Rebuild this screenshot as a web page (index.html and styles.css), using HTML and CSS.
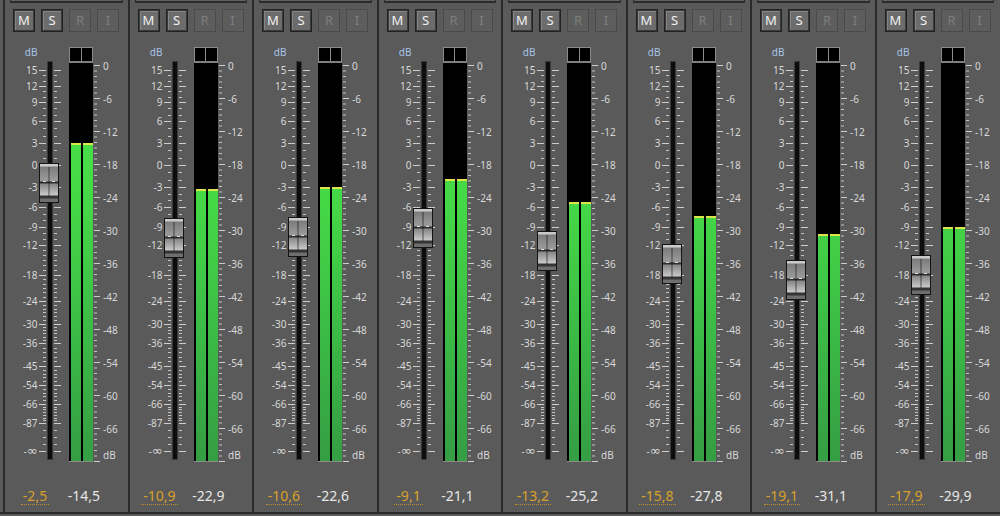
FILE: index.html
```html
<!DOCTYPE html>
<html>
<head>
<meta charset="utf-8">
<link rel="stylesheet" href="styles.css">
</head>
<body>
<svg class="defs" width="0" height="0">
  <symbol id="fs" viewBox="0 0 60 430">
    <rect x="42.5" y="21.5" width="5" height="398" fill="#0d0d0d" stroke="#3b3b3b"/>
    <path fill="none" stroke="#cdcdcd" d="M34 30.5h7m8 0h7M34 46.5h7m8 0h7M34 62.5h7m8 0h7M34 81.5h7m8 0h7M34 103.5h7m8 0h7M34 125.5h7m8 0h7M34 147.5h7m8 0h7M34 167.5h7m8 0h7M34 187.5h7m8 0h7M34 205.5h7m8 0h7M34 235.5h7m8 0h7M34 261.5h7m8 0h7M34 284.5h7m8 0h7M34 303.5h7m8 0h7M34 326.5h7m8 0h7M34 345.5h7m8 0h7M34 364.5h7m8 0h7M34 383.5h7m8 0h7M34 411.5h7m8 0h7"/>
    <path fill="none" stroke="#c4c4c4" d="M38 35.5h3m8 0h3M38 41.5h3m8 0h3M38 51.5h3m8 0h3M38 57.5h3m8 0h3M38 68.5h3m8 0h3M38 75.5h3m8 0h3M38 88.5h3m8 0h3M38 96.5h3m8 0h3M38 110.5h3m8 0h3M38 118.5h3m8 0h3M38 132.5h3m8 0h3M38 140.5h3m8 0h3M38 154.5h3m8 0h3M38 160.5h3m8 0h3M38 174.5h3m8 0h3M38 180.5h3m8 0h3M38 193.5h3m8 0h3M38 199.5h3m8 0h3M38 210.5h3m8 0h3M38 215.5h3m8 0h3M38 220.5h3m8 0h3M38 225.5h3m8 0h3M38 230.5h3m8 0h3M38 239.5h3m8 0h3M38 244.5h3m8 0h3M38 248.5h3m8 0h3M38 252.5h3m8 0h3M38 257.5h3m8 0h3M38 265.5h3m8 0h3M38 269.5h3m8 0h3M38 272.5h3m8 0h3M38 276.5h3m8 0h3M38 280.5h3m8 0h3M38 287.5h3m8 0h3M38 290.5h3m8 0h3M38 293.5h3m8 0h3M38 297.5h3m8 0h3M38 300.5h3m8 0h3M38 308.5h3m8 0h3M38 312.5h3m8 0h3M38 317.5h3m8 0h3M38 321.5h3m8 0h3M38 330.5h3m8 0h3M38 334.5h3m8 0h3M38 337.5h3m8 0h3M38 341.5h3m8 0h3M38 349.5h3m8 0h3M38 353.5h3m8 0h3M38 356.5h3m8 0h3M38 360.5h3m8 0h3M38 367.5h3m8 0h3M38 369.5h3m8 0h3M38 372.5h3m8 0h3M38 375.5h3m8 0h3M38 378.5h3m8 0h3M38 380.5h3m8 0h3M38 390.5h3m8 0h3M38 397.5h3m8 0h3M38 404.5h3m8 0h3"/>
  </symbol>
  <symbol id="ms" viewBox="0 0 31 430">
    <line x1="2.5" y1="25" x2="2.5" y2="423" stroke="#c4c4c4" stroke-width="3" stroke-dasharray="1 4.5"/>
    <line x1="4" y1="25" x2="4" y2="423" stroke="#cdcdcd" stroke-width="6" stroke-dasharray="1 32"/>
  </symbol>
</svg>

<div class="mixer">

  <div class="strip">
    <div class="lid"></div>
    <div class="btns"><span class="btn on">M</span><span class="btn on">S</span><span class="btn off">R</span><span class="btn off">I</span></div>
    <div class="body">
      <div class="fader">
        <svg class="scale" width="60" height="430" viewBox="0 0 60 430"><use href="#fs"/><g class="fl"><text class="db" x="32.5" y="16">dB</text><text x="32.5" y="33.5">15</text><text x="32.5" y="49.5">12</text><text x="32.5" y="65.5">9</text><text x="32.5" y="84.5">6</text><text x="32.5" y="106.5">3</text><text x="32.5" y="128.5">0</text><text x="32.5" y="150.5">-3</text><text x="32.5" y="170.5">-6</text><text x="32.5" y="190.5">-9</text><text x="32.5" y="208.5">-12</text><text x="32.5" y="238.5">-18</text><text x="32.5" y="264.5">-24</text><text x="32.5" y="287.5">-30</text><text x="32.5" y="306.5">-36</text><text x="32.5" y="329.5">-45</text><text x="32.5" y="348.5">-54</text><text x="32.5" y="367.5">-66</text><text x="32.5" y="386.5">-87</text><text x="32.5" y="415">-<tspan class="inf">∞</tspan></text></g></svg>
        <div class="thumb" style="top:123px"></div>
      </div>
      <div class="meter">
        <div class="peaks"><span></span><span></span></div>
        <div class="bars"><span class="bar" style="height:318px"></span><span class="bar" style="height:318px"></span></div>
      </div>
      <svg class="scale" width="31" height="430" viewBox="0 0 31 430"><use href="#ms"/><g class="ml"><text x="10" y="29.5">0</text><text x="10" y="62.5">-6</text><text x="10" y="95.5">-12</text><text x="10" y="128.5">-18</text><text x="10" y="161.5">-24</text><text x="10" y="194.5">-30</text><text x="10" y="227.5">-36</text><text x="10" y="260.5">-42</text><text x="10" y="293.5">-48</text><text x="10" y="326.5">-54</text><text x="10" y="359.5">-60</text><text x="10" y="392.5">-66</text><text x="10" y="418.5">dB</text></g></svg>
    </div>
    <div class="readouts"><span class="vol"><span class="u">-2,5</span></span><span class="lvl">-14,5</span></div>
  </div>

  <div class="strip">
    <div class="lid"></div>
    <div class="btns"><span class="btn on">M</span><span class="btn on">S</span><span class="btn off">R</span><span class="btn off">I</span></div>
    <div class="body">
      <div class="fader">
        <svg class="scale" width="60" height="430" viewBox="0 0 60 430"><use href="#fs"/><g class="fl"><text class="db" x="32.5" y="16">dB</text><text x="32.5" y="33.5">15</text><text x="32.5" y="49.5">12</text><text x="32.5" y="65.5">9</text><text x="32.5" y="84.5">6</text><text x="32.5" y="106.5">3</text><text x="32.5" y="128.5">0</text><text x="32.5" y="150.5">-3</text><text x="32.5" y="170.5">-6</text><text x="32.5" y="190.5">-9</text><text x="32.5" y="208.5">-12</text><text x="32.5" y="238.5">-18</text><text x="32.5" y="264.5">-24</text><text x="32.5" y="287.5">-30</text><text x="32.5" y="306.5">-36</text><text x="32.5" y="329.5">-45</text><text x="32.5" y="348.5">-54</text><text x="32.5" y="367.5">-66</text><text x="32.5" y="386.5">-87</text><text x="32.5" y="415">-<tspan class="inf">∞</tspan></text></g></svg>
        <div class="thumb" style="top:178px"></div>
      </div>
      <div class="meter">
        <div class="peaks"><span></span><span></span></div>
        <div class="bars"><span class="bar" style="height:272px"></span><span class="bar" style="height:272px"></span></div>
      </div>
      <svg class="scale" width="31" height="430" viewBox="0 0 31 430"><use href="#ms"/><g class="ml"><text x="10" y="29.5">0</text><text x="10" y="62.5">-6</text><text x="10" y="95.5">-12</text><text x="10" y="128.5">-18</text><text x="10" y="161.5">-24</text><text x="10" y="194.5">-30</text><text x="10" y="227.5">-36</text><text x="10" y="260.5">-42</text><text x="10" y="293.5">-48</text><text x="10" y="326.5">-54</text><text x="10" y="359.5">-60</text><text x="10" y="392.5">-66</text><text x="10" y="418.5">dB</text></g></svg>
    </div>
    <div class="readouts"><span class="vol"><span class="u">-10,9</span></span><span class="lvl">-22,9</span></div>
  </div>

  <div class="strip">
    <div class="lid"></div>
    <div class="btns"><span class="btn on">M</span><span class="btn on">S</span><span class="btn off">R</span><span class="btn off">I</span></div>
    <div class="body">
      <div class="fader">
        <svg class="scale" width="60" height="430" viewBox="0 0 60 430"><use href="#fs"/><g class="fl"><text class="db" x="32.5" y="16">dB</text><text x="32.5" y="33.5">15</text><text x="32.5" y="49.5">12</text><text x="32.5" y="65.5">9</text><text x="32.5" y="84.5">6</text><text x="32.5" y="106.5">3</text><text x="32.5" y="128.5">0</text><text x="32.5" y="150.5">-3</text><text x="32.5" y="170.5">-6</text><text x="32.5" y="190.5">-9</text><text x="32.5" y="208.5">-12</text><text x="32.5" y="238.5">-18</text><text x="32.5" y="264.5">-24</text><text x="32.5" y="287.5">-30</text><text x="32.5" y="306.5">-36</text><text x="32.5" y="329.5">-45</text><text x="32.5" y="348.5">-54</text><text x="32.5" y="367.5">-66</text><text x="32.5" y="386.5">-87</text><text x="32.5" y="415">-<tspan class="inf">∞</tspan></text></g></svg>
        <div class="thumb" style="top:177px"></div>
      </div>
      <div class="meter">
        <div class="peaks"><span></span><span></span></div>
        <div class="bars"><span class="bar" style="height:274px"></span><span class="bar" style="height:274px"></span></div>
      </div>
      <svg class="scale" width="31" height="430" viewBox="0 0 31 430"><use href="#ms"/><g class="ml"><text x="10" y="29.5">0</text><text x="10" y="62.5">-6</text><text x="10" y="95.5">-12</text><text x="10" y="128.5">-18</text><text x="10" y="161.5">-24</text><text x="10" y="194.5">-30</text><text x="10" y="227.5">-36</text><text x="10" y="260.5">-42</text><text x="10" y="293.5">-48</text><text x="10" y="326.5">-54</text><text x="10" y="359.5">-60</text><text x="10" y="392.5">-66</text><text x="10" y="418.5">dB</text></g></svg>
    </div>
    <div class="readouts"><span class="vol"><span class="u">-10,6</span></span><span class="lvl">-22,6</span></div>
  </div>

  <div class="strip">
    <div class="lid"></div>
    <div class="btns"><span class="btn on">M</span><span class="btn on">S</span><span class="btn off">R</span><span class="btn off">I</span></div>
    <div class="body">
      <div class="fader">
        <svg class="scale" width="60" height="430" viewBox="0 0 60 430"><use href="#fs"/><g class="fl"><text class="db" x="32.5" y="16">dB</text><text x="32.5" y="33.5">15</text><text x="32.5" y="49.5">12</text><text x="32.5" y="65.5">9</text><text x="32.5" y="84.5">6</text><text x="32.5" y="106.5">3</text><text x="32.5" y="128.5">0</text><text x="32.5" y="150.5">-3</text><text x="32.5" y="170.5">-6</text><text x="32.5" y="190.5">-9</text><text x="32.5" y="208.5">-12</text><text x="32.5" y="238.5">-18</text><text x="32.5" y="264.5">-24</text><text x="32.5" y="287.5">-30</text><text x="32.5" y="306.5">-36</text><text x="32.5" y="329.5">-45</text><text x="32.5" y="348.5">-54</text><text x="32.5" y="367.5">-66</text><text x="32.5" y="386.5">-87</text><text x="32.5" y="415">-<tspan class="inf">∞</tspan></text></g></svg>
        <div class="thumb" style="top:168px"></div>
      </div>
      <div class="meter">
        <div class="peaks"><span></span><span></span></div>
        <div class="bars"><span class="bar" style="height:282px"></span><span class="bar" style="height:282px"></span></div>
      </div>
      <svg class="scale" width="31" height="430" viewBox="0 0 31 430"><use href="#ms"/><g class="ml"><text x="10" y="29.5">0</text><text x="10" y="62.5">-6</text><text x="10" y="95.5">-12</text><text x="10" y="128.5">-18</text><text x="10" y="161.5">-24</text><text x="10" y="194.5">-30</text><text x="10" y="227.5">-36</text><text x="10" y="260.5">-42</text><text x="10" y="293.5">-48</text><text x="10" y="326.5">-54</text><text x="10" y="359.5">-60</text><text x="10" y="392.5">-66</text><text x="10" y="418.5">dB</text></g></svg>
    </div>
    <div class="readouts"><span class="vol"><span class="u">-9,1</span></span><span class="lvl">-21,1</span></div>
  </div>

  <div class="strip">
    <div class="lid"></div>
    <div class="btns"><span class="btn on">M</span><span class="btn on">S</span><span class="btn off">R</span><span class="btn off">I</span></div>
    <div class="body">
      <div class="fader">
        <svg class="scale" width="60" height="430" viewBox="0 0 60 430"><use href="#fs"/><g class="fl"><text class="db" x="32.5" y="16">dB</text><text x="32.5" y="33.5">15</text><text x="32.5" y="49.5">12</text><text x="32.5" y="65.5">9</text><text x="32.5" y="84.5">6</text><text x="32.5" y="106.5">3</text><text x="32.5" y="128.5">0</text><text x="32.5" y="150.5">-3</text><text x="32.5" y="170.5">-6</text><text x="32.5" y="190.5">-9</text><text x="32.5" y="208.5">-12</text><text x="32.5" y="238.5">-18</text><text x="32.5" y="264.5">-24</text><text x="32.5" y="287.5">-30</text><text x="32.5" y="306.5">-36</text><text x="32.5" y="329.5">-45</text><text x="32.5" y="348.5">-54</text><text x="32.5" y="367.5">-66</text><text x="32.5" y="386.5">-87</text><text x="32.5" y="415">-<tspan class="inf">∞</tspan></text></g></svg>
        <div class="thumb" style="top:191px"></div>
      </div>
      <div class="meter">
        <div class="peaks"><span></span><span></span></div>
        <div class="bars"><span class="bar" style="height:259px"></span><span class="bar" style="height:259px"></span></div>
      </div>
      <svg class="scale" width="31" height="430" viewBox="0 0 31 430"><use href="#ms"/><g class="ml"><text x="10" y="29.5">0</text><text x="10" y="62.5">-6</text><text x="10" y="95.5">-12</text><text x="10" y="128.5">-18</text><text x="10" y="161.5">-24</text><text x="10" y="194.5">-30</text><text x="10" y="227.5">-36</text><text x="10" y="260.5">-42</text><text x="10" y="293.5">-48</text><text x="10" y="326.5">-54</text><text x="10" y="359.5">-60</text><text x="10" y="392.5">-66</text><text x="10" y="418.5">dB</text></g></svg>
    </div>
    <div class="readouts"><span class="vol"><span class="u">-13,2</span></span><span class="lvl">-25,2</span></div>
  </div>

  <div class="strip">
    <div class="lid"></div>
    <div class="btns"><span class="btn on">M</span><span class="btn on">S</span><span class="btn off">R</span><span class="btn off">I</span></div>
    <div class="body">
      <div class="fader">
        <svg class="scale" width="60" height="430" viewBox="0 0 60 430"><use href="#fs"/><g class="fl"><text class="db" x="32.5" y="16">dB</text><text x="32.5" y="33.5">15</text><text x="32.5" y="49.5">12</text><text x="32.5" y="65.5">9</text><text x="32.5" y="84.5">6</text><text x="32.5" y="106.5">3</text><text x="32.5" y="128.5">0</text><text x="32.5" y="150.5">-3</text><text x="32.5" y="170.5">-6</text><text x="32.5" y="190.5">-9</text><text x="32.5" y="208.5">-12</text><text x="32.5" y="238.5">-18</text><text x="32.5" y="264.5">-24</text><text x="32.5" y="287.5">-30</text><text x="32.5" y="306.5">-36</text><text x="32.5" y="329.5">-45</text><text x="32.5" y="348.5">-54</text><text x="32.5" y="367.5">-66</text><text x="32.5" y="386.5">-87</text><text x="32.5" y="415">-<tspan class="inf">∞</tspan></text></g></svg>
        <div class="thumb" style="top:204px"></div>
      </div>
      <div class="meter">
        <div class="peaks"><span></span><span></span></div>
        <div class="bars"><span class="bar" style="height:245px"></span><span class="bar" style="height:245px"></span></div>
      </div>
      <svg class="scale" width="31" height="430" viewBox="0 0 31 430"><use href="#ms"/><g class="ml"><text x="10" y="29.5">0</text><text x="10" y="62.5">-6</text><text x="10" y="95.5">-12</text><text x="10" y="128.5">-18</text><text x="10" y="161.5">-24</text><text x="10" y="194.5">-30</text><text x="10" y="227.5">-36</text><text x="10" y="260.5">-42</text><text x="10" y="293.5">-48</text><text x="10" y="326.5">-54</text><text x="10" y="359.5">-60</text><text x="10" y="392.5">-66</text><text x="10" y="418.5">dB</text></g></svg>
    </div>
    <div class="readouts"><span class="vol"><span class="u">-15,8</span></span><span class="lvl">-27,8</span></div>
  </div>

  <div class="strip">
    <div class="lid"></div>
    <div class="btns"><span class="btn on">M</span><span class="btn on">S</span><span class="btn off">R</span><span class="btn off">I</span></div>
    <div class="body">
      <div class="fader">
        <svg class="scale" width="60" height="430" viewBox="0 0 60 430"><use href="#fs"/><g class="fl"><text class="db" x="32.5" y="16">dB</text><text x="32.5" y="33.5">15</text><text x="32.5" y="49.5">12</text><text x="32.5" y="65.5">9</text><text x="32.5" y="84.5">6</text><text x="32.5" y="106.5">3</text><text x="32.5" y="128.5">0</text><text x="32.5" y="150.5">-3</text><text x="32.5" y="170.5">-6</text><text x="32.5" y="190.5">-9</text><text x="32.5" y="208.5">-12</text><text x="32.5" y="238.5">-18</text><text x="32.5" y="264.5">-24</text><text x="32.5" y="287.5">-30</text><text x="32.5" y="306.5">-36</text><text x="32.5" y="329.5">-45</text><text x="32.5" y="348.5">-54</text><text x="32.5" y="367.5">-66</text><text x="32.5" y="386.5">-87</text><text x="32.5" y="415">-<tspan class="inf">∞</tspan></text></g></svg>
        <div class="thumb" style="top:220px"></div>
      </div>
      <div class="meter">
        <div class="peaks"><span></span><span></span></div>
        <div class="bars"><span class="bar" style="height:227px"></span><span class="bar" style="height:227px"></span></div>
      </div>
      <svg class="scale" width="31" height="430" viewBox="0 0 31 430"><use href="#ms"/><g class="ml"><text x="10" y="29.5">0</text><text x="10" y="62.5">-6</text><text x="10" y="95.5">-12</text><text x="10" y="128.5">-18</text><text x="10" y="161.5">-24</text><text x="10" y="194.5">-30</text><text x="10" y="227.5">-36</text><text x="10" y="260.5">-42</text><text x="10" y="293.5">-48</text><text x="10" y="326.5">-54</text><text x="10" y="359.5">-60</text><text x="10" y="392.5">-66</text><text x="10" y="418.5">dB</text></g></svg>
    </div>
    <div class="readouts"><span class="vol"><span class="u">-19,1</span></span><span class="lvl">-31,1</span></div>
  </div>

  <div class="strip">
    <div class="lid"></div>
    <div class="btns"><span class="btn on">M</span><span class="btn on">S</span><span class="btn off">R</span><span class="btn off">I</span></div>
    <div class="body">
      <div class="fader">
        <svg class="scale" width="60" height="430" viewBox="0 0 60 430"><use href="#fs"/><g class="fl"><text class="db" x="32.5" y="16">dB</text><text x="32.5" y="33.5">15</text><text x="32.5" y="49.5">12</text><text x="32.5" y="65.5">9</text><text x="32.5" y="84.5">6</text><text x="32.5" y="106.5">3</text><text x="32.5" y="128.5">0</text><text x="32.5" y="150.5">-3</text><text x="32.5" y="170.5">-6</text><text x="32.5" y="190.5">-9</text><text x="32.5" y="208.5">-12</text><text x="32.5" y="238.5">-18</text><text x="32.5" y="264.5">-24</text><text x="32.5" y="287.5">-30</text><text x="32.5" y="306.5">-36</text><text x="32.5" y="329.5">-45</text><text x="32.5" y="348.5">-54</text><text x="32.5" y="367.5">-66</text><text x="32.5" y="386.5">-87</text><text x="32.5" y="415">-<tspan class="inf">∞</tspan></text></g></svg>
        <div class="thumb" style="top:215px"></div>
      </div>
      <div class="meter">
        <div class="peaks"><span></span><span></span></div>
        <div class="bars"><span class="bar" style="height:234px"></span><span class="bar" style="height:234px"></span></div>
      </div>
      <svg class="scale" width="31" height="430" viewBox="0 0 31 430"><use href="#ms"/><g class="ml"><text x="10" y="29.5">0</text><text x="10" y="62.5">-6</text><text x="10" y="95.5">-12</text><text x="10" y="128.5">-18</text><text x="10" y="161.5">-24</text><text x="10" y="194.5">-30</text><text x="10" y="227.5">-36</text><text x="10" y="260.5">-42</text><text x="10" y="293.5">-48</text><text x="10" y="326.5">-54</text><text x="10" y="359.5">-60</text><text x="10" y="392.5">-66</text><text x="10" y="418.5">dB</text></g></svg>
    </div>
    <div class="readouts"><span class="vol"><span class="u">-17,9</span></span><span class="lvl">-29,9</span></div>
  </div>

</div>
</body>
</html>
```

FILE: styles.css
```css
* { box-sizing: border-box; }
html, body { margin: 0; padding: 0; background: #5a5a5a; }
body {
  width: 1000px;
  height: 516px;
  overflow: hidden;
  font-family: "Noto Sans", "DejaVu Sans", sans-serif;
}
.defs { position: absolute; width: 0; height: 0; overflow: hidden; }

.mixer {
  display: grid;
  grid-template-columns: repeat(8, 124.5px);
  padding-left: 3px;
  height: 514px;
  border-bottom: 2px solid #2a2a2a;
}
.strip {
  border-left: 2px solid #2a2a2a;
  display: flex;
  flex-direction: column;
  overflow: hidden;
}
.lid {
  height: 3px;
  margin: 0 5px;
  border: 1px solid #2b2b2b;
  border-top: 0;
  border-bottom-width: 2px;
  background: #5f5f5f;
}
.btns {
  display: flex;
  gap: 6px;
  margin: 6px 0 0 8px;
}
.btn {
  width: 22px;
  height: 23px;
  display: flex;
  align-items: center;
  justify-content: center;
  font-size: 13px;
  line-height: 1;
}
.btn.on {
  border: 1px solid #222;
  box-shadow: inset 0 0 0 1px #3a3a3a, inset 1px 1px 0 1px #858585;
  background: #6c6c6c;
  color: #f0f0f0;
}
.btn.off {
  border: 1px solid #4a4a4a;
  background: #5d5d5d;
  color: #7e7e7e;
}

.body {
  display: flex;
  margin-top: 8px;
  height: 430px;
}
.scale {
  display: block;
  flex: none;
  font-family: "Noto Sans", "DejaVu Sans", sans-serif;
  font-size: 10px;
}
.fl { text-anchor: end; fill: #d8d8d8; }
.fl .db { fill: #a9c6ea; }
.fl .inf { font-size: 13px; font-family: "DejaVu Sans", sans-serif; }
.ml { fill: #d8d8d8; }

.fader {
  position: relative;
  width: 60px;
  height: 430px;
  flex: none;
}
.thumb {
  position: absolute;
  left: 34px;
  width: 20px;
  height: 40px;
  border: 1px solid #141414;
  background: linear-gradient(to bottom,
    #cacaca 0, #cacaca 2px,
    #7c7c7c 3px, #9c9c9c 17px,
    #2c2c2c 18px, #2c2c2c 19px,
    #878787 20px, #c8c8c8 31px,
    #343434 32px, #343434 34px,
    #6e6e6e 35px, #6e6e6e 38px);
}
.thumb::before {
  content: "";
  position: absolute;
  left: 8px;
  width: 2px;
  top: 3px;
  bottom: 6px;
  background: rgba(0, 0, 0, 0.28);
}
.thumb::after {
  content: "";
  position: absolute;
  left: 3px;
  width: 12px;
  top: 17px;
  height: 1px;
  background: linear-gradient(to right, #dcdcdc 0 3px, transparent 3px 9px, #dcdcdc 9px 12px);
}

.meter {
  margin: 7px 0 0 4px;
  width: 24px;
  flex: none;
}
.peaks {
  display: flex;
  gap: 1px;
  height: 14px;
  border: 1px solid #8a8a8a;
  border-bottom: 0;
  background: #8a8a8a;
}
.peaks span {
  flex: 1;
  background: #000;
}
.bars {
  height: 401px;
  border-top: 2px solid #808080;
  border-bottom: 1px solid #8c8c8c;
  background: #000;
  display: flex;
  align-items: flex-end;
  gap: 2px;
  padding-left: 2px;
}
.bar {
  width: 10px;
  background:
    linear-gradient(#dce64a, #dce64a) top / 100% 2px no-repeat,
    linear-gradient(to top, #359d43 0%, #3cbd46 35%, #45d846 65%, #4de64b 100%) bottom / 100% 398px no-repeat;
}

.readouts {
  display: flex;
  align-items: center;
  margin-top: 16px;
  height: 20px;
  font-size: 14px;
}
.vol {
  width: 60px;
  display: flex;
  justify-content: center;
  align-items: center;
  color: #d9a12b;
}
.u {
  display: inline-block;
  line-height: 16px;
  padding: 0 2px;
  border-bottom: 1px dotted #c48f22;
}
.lvl {
  width: 38px;
  text-align: center;
  color: #e6e6e6;
  line-height: 16px;
}
```
